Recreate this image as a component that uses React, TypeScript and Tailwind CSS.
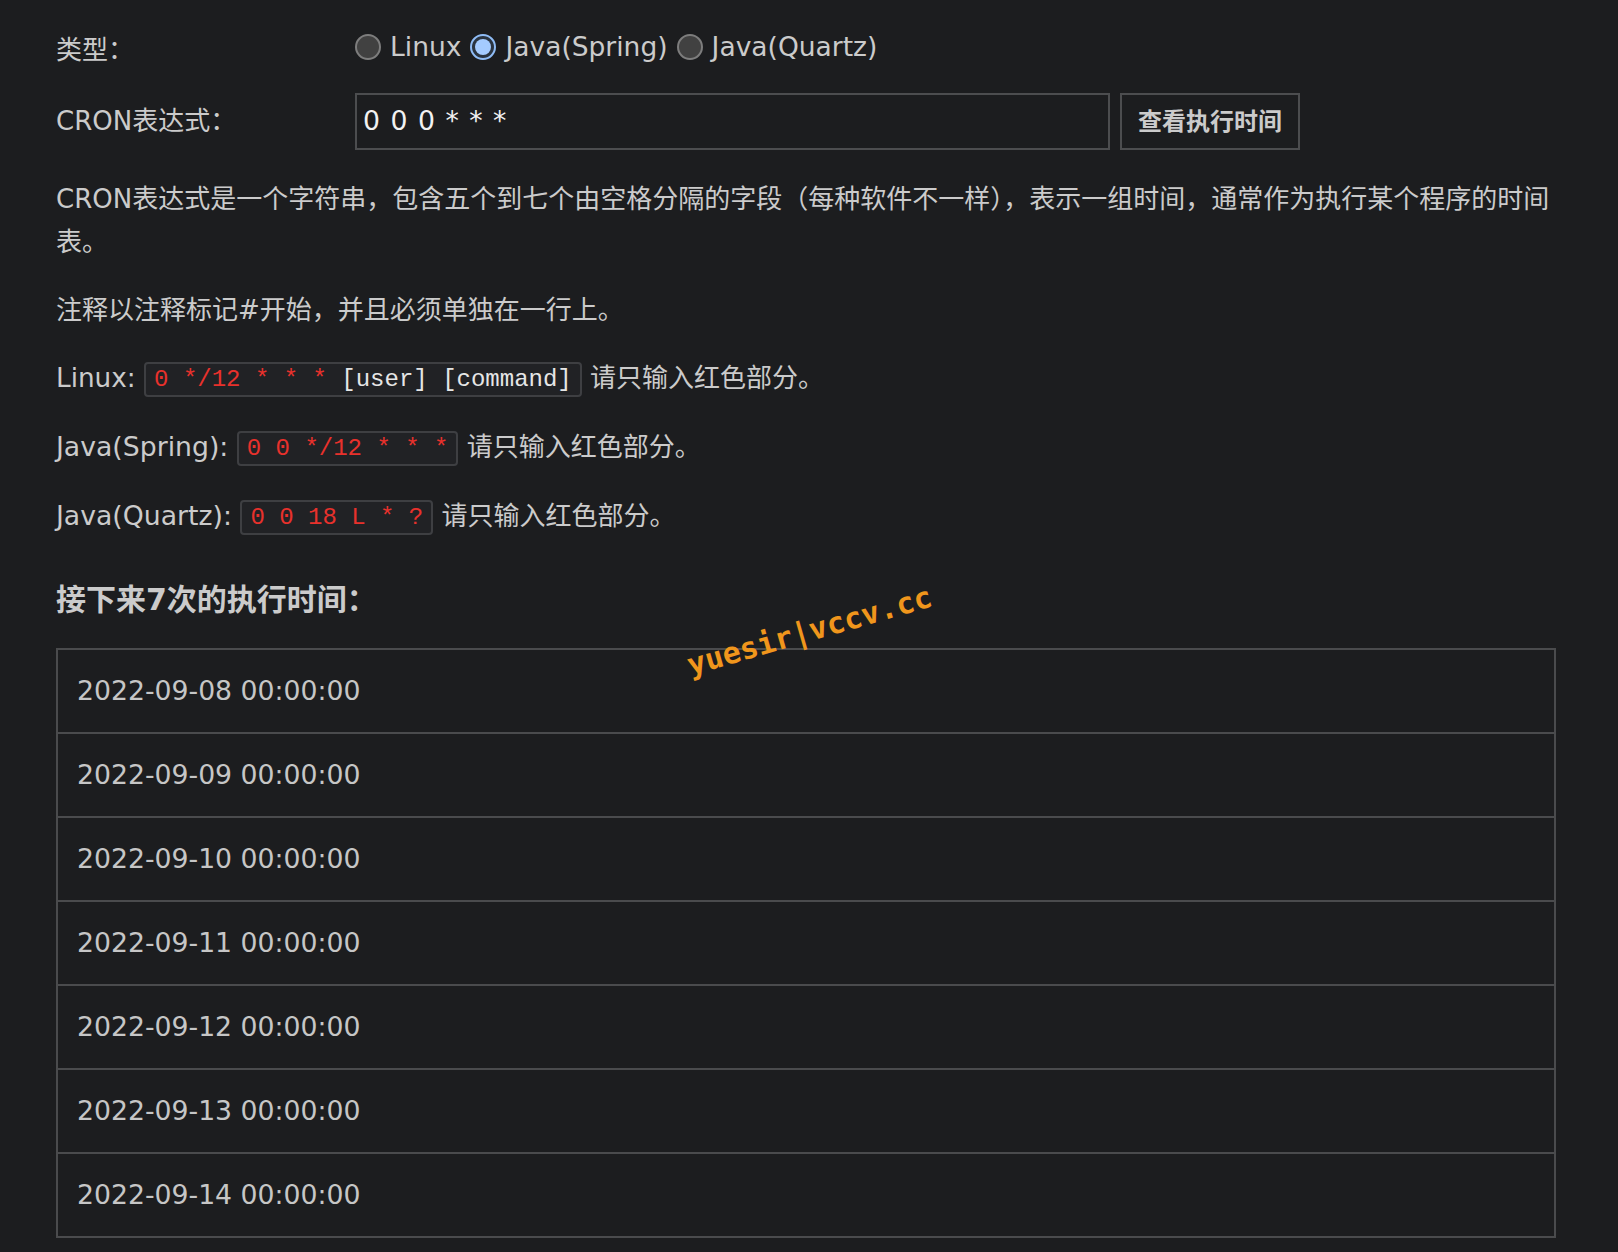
import React from "react";

const FONT = '"DejaVu Sans", "Noto Sans CJK SC", sans-serif';

function Radio({ checked }: { checked?: boolean }) {
  if (checked) {
    return (
      <span className="inline-flex h-[26px] w-[26px] items-center justify-center rounded-full border-2 border-[#8fbcf5] bg-[#2a3440]">
        <span className="h-[16px] w-[16px] rounded-full bg-[#a4cbff]" />
      </span>
    );
  }
  return <span className="inline-block h-[26px] w-[26px] rounded-full border-2 border-[#7d7d7d] bg-[#414141]" />;
}

function Code({ children }: { children: React.ReactNode }) {
  return (
    <span
      className="inline-block h-[35px] rounded-[4px] border-2 border-[#3e3f42] bg-[#212225] px-[8px] align-middle text-[24px] leading-[31px]"
      style={{ fontFamily: '"Liberation Mono", monospace' }}
    >
      {children}
    </span>
  );
}

const dates = [
  "2022-09-08 00:00:00",
  "2022-09-09 00:00:00",
  "2022-09-10 00:00:00",
  "2022-09-11 00:00:00",
  "2022-09-12 00:00:00",
  "2022-09-13 00:00:00",
  "2022-09-14 00:00:00",
];

export default function App() {
  return (
    <div
      className="relative min-h-[1252px] w-full bg-[#1c1d1f] pl-[56px] pt-[22px] text-[26px] text-[#cbcbcb]"
      style={{ fontFamily: FONT }}
    >
      <div className="w-[1500px]">
        <div className="flex h-[50px] items-center">
          <div className="w-[299px] pt-[6px]">类型：</div>
          <div className="flex items-center gap-[9px] text-[26.5px]">
            <Radio />
            <span>Linux</span>
            <Radio checked />
            <span>Java(Spring)</span>
            <Radio />
            <span>Java(Quartz)</span>
          </div>
        </div>

        <div className="mt-[20px] flex h-[59px] items-center">
          <div className="w-[299px]">CRON表达式：</div>
          <div className="flex h-[57px] w-[755px] items-center border-2 border-[#4c4d4f] pl-[6px] text-[26.7px] tracking-[1px] text-[#f2f2f2]">
            0 0 0 * * *
          </div>
          <button className="ml-[10px] h-[57px] w-[180px] border-2 border-[#4c4d4f] bg-[#1c1d1f] text-[24px] font-semibold text-[#cbcbcb]">
            查看执行时间
          </button>
        </div>

        <p className="mt-[27px] leading-[43px]">
          CRON表达式是一个字符串，包含五个到七个由空格分隔的字段（每种软件不一样），表示一组时间，通常作为执行某个程序的时间表。
        </p>

        <p className="mt-[25px] leading-[42px]">注释以注释标记#开始，并且必须单独在一行上。</p>

        <p className="mt-[26px] leading-[42px]">
          <span className="text-[26.3px]">Linux: </span>
          <Code>
            <span className="text-[#e8312c]">0 */12 * * *</span>
            <span className="text-[#e6e6e6]"> [user] [command]</span>
          </Code>{" "}
          请只输入红色部分。
        </p>

        <p className="mt-[27px] leading-[42px]">
          <span className="text-[26.7px]">Java(Spring): </span>
          <Code>
            <span className="text-[#e8312c]">0 0 */12 * * *</span>
          </Code>{" "}
          请只输入红色部分。
        </p>

        <p className="mt-[27px] leading-[42px]">
          <span className="text-[26.7px]">Java(Quartz): </span>
          <Code>
            <span className="text-[#e8312c]">0 0 18 L * ?</span>
          </Code>{" "}
          请只输入红色部分。
        </p>

        <h3 className="mt-[43px] text-[30px] font-bold leading-[40px] text-[#cbcbcb]">接下来7次的执行时间：</h3>

        <div className="mt-[28px] border-2 border-[#4a4b4d]">
          {dates.map((d, i) => (
            <div
              key={d}
              className={`flex items-center pl-[19px] text-[26.7px] text-[#c6c6c6] ${i > 0 ? "h-[84px] border-t-2 border-[#4a4b4d]" : "h-[82px]"}`}
            >
              {d}
            </div>
          ))}
        </div>
      </div>

      <div
        className="pointer-events-none absolute left-[683px] top-[608px] -rotate-[16deg] text-[30px] font-bold text-[#f0961c]"
        style={{ fontFamily: '"DejaVu Sans Mono", monospace' }}
      >
        yuesir|vccv.cc
      </div>
    </div>
  );
}
